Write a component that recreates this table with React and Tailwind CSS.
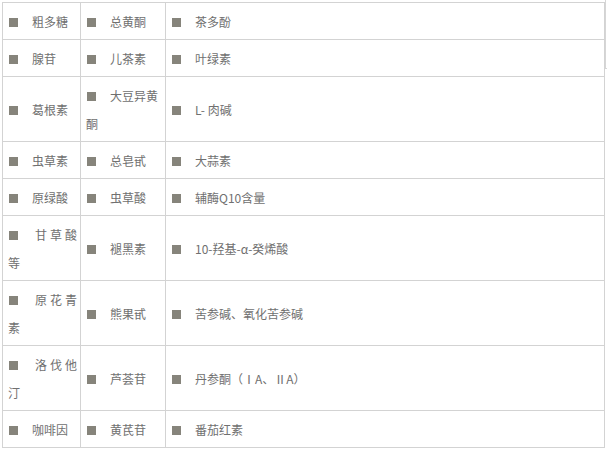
const rows = [
  ["粗多糖", "总黄酮", "茶多酚"],
  ["腺苷", "儿茶素", "叶绿素"],
  ["葛根素", { first: "大豆异黄", rest: "酮" }, "L- 肉碱"],
  ["虫草素", "总皂甙", "大蒜素"],
  ["原绿酸", "虫草酸", "辅酶Q10含量"],
  [{ first: "甘草酸", rest: "等", spread: true }, "褪黑素", "10-羟基-α-癸烯酸"],
  [{ first: "原花青", rest: "素", spread: true }, "熊果甙", "苦参碱、氧化苦参碱"],
  [{ first: "洛伐他", rest: "汀", spread: true }, "芦荟苷", "丹参酮（ⅠA、ⅡA）"],
  ["咖啡因", "黄芪苷", "番茄红素"],
];

function Square() {
  return <span className="ml-px inline-block w-[9px] h-[9px] shrink-0 bg-[#86847b]" />;
}

function Cell({ item }) {
  if (typeof item === "string") {
    return (
      <div className="flex items-center">
        <Square />
        <span className="ml-[14px] whitespace-nowrap">{item}</span>
      </div>
    );
  }
  return (
    <div>
      <div className="flex items-center">
        <Square />
        <span className={item.spread ? "ml-[17px] tracking-[3px] whitespace-nowrap" : "ml-[14px] whitespace-nowrap"}>
          {item.first}
        </span>
      </div>
      <div>{item.rest}</div>
    </div>
  );
}

export default function App() {
  return (
    <div className="relative w-[608px] h-[450px] bg-white overflow-hidden pl-[2px] pt-[2px] text-[12px] leading-[28px] text-[#707070] font-['Noto_Sans_CJK_SC','Noto_Sans',sans-serif]">
      <table className="w-[603px] table-fixed border-collapse">
        <colgroup>
          <col className="w-[78px]" />
          <col className="w-[85px]" />
          <col />
        </colgroup>
        <tbody>
          {rows.map((row, i) => (
            <tr key={i}>
              {row.map((item, j) => (
                <td key={j} className="border border-[#d3d3d3] pl-[5px] pr-[4px] pt-[5px] pb-[3px] align-middle">
                  <Cell item={item} />
                </td>
              ))}
            </tr>
          ))}
        </tbody>
      </table>
      {/* scrollbar edge */}
      <div className="absolute right-[1px] top-0 w-[2px] h-[69px] border-l border-b border-[#d6d6d6]" />
    </div>
  );
}
